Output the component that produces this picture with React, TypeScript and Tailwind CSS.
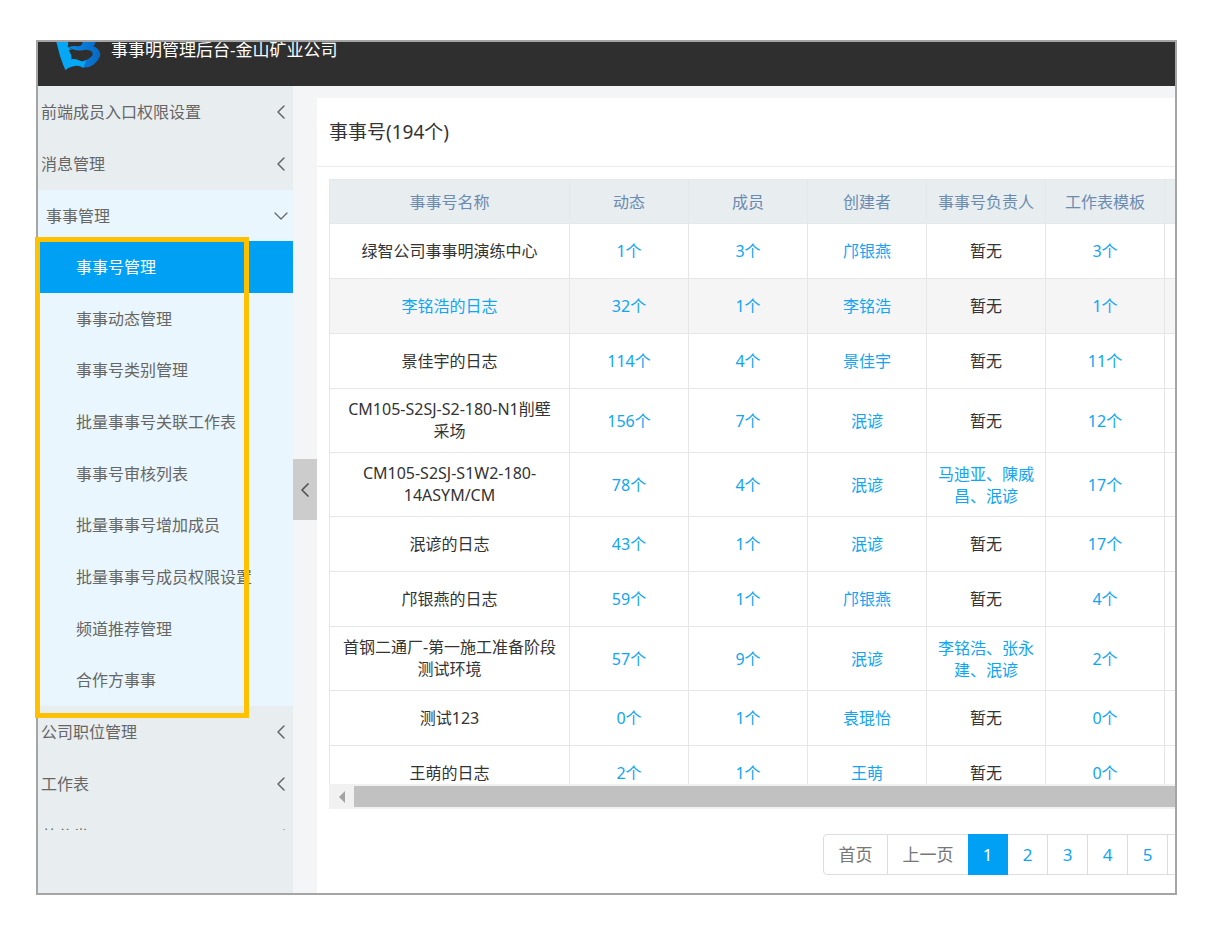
import { useState } from "react";
import { ChevronDown, ChevronLeft } from "lucide-react";
import clsx from "clsx";

type Row = {
  name: string;
  posts: number;
  members: number;
  creator: string;
  owners?: string;
  templates: number;
};

const subItems = [
  "事事号管理",
  "事事动态管理",
  "事事号类别管理",
  "批量事事号关联工作表",
  "事事号审核列表",
  "批量事事号增加成员",
  "批量事事号成员权限设置",
  "频道推荐管理",
  "合作方事事",
];

const columns = ["事事号名称", "动态", "成员", "创建者", "事事号负责人", "工作表模板"];

const rows: Row[] = [
  { name: "绿智公司事事明演练中心", posts: 1, members: 3, creator: "邝银燕", templates: 3 },
  { name: "李铭浩的日志", posts: 32, members: 1, creator: "李铭浩", templates: 1 },
  { name: "景佳宇的日志", posts: 114, members: 4, creator: "景佳宇", templates: 11 },
  { name: "CM105-S2SJ-S2-180-N1削壁采场", posts: 156, members: 7, creator: "泯谚", templates: 12 },
  { name: "CM105-S2SJ-S1W2-180-14ASYM/CM", posts: 78, members: 4, creator: "泯谚", owners: "马迪亚、陳威昌、泯谚", templates: 17 },
  { name: "泯谚的日志", posts: 43, members: 1, creator: "泯谚", templates: 17 },
  { name: "邝银燕的日志", posts: 59, members: 1, creator: "邝银燕", templates: 4 },
  { name: "首钢二通厂-第一施工准备阶段测试环境", posts: 57, members: 9, creator: "泯谚", owners: "李铭浩、张永建、泯谚", templates: 2 },
  { name: "测试123", posts: 0, members: 1, creator: "袁琨怡", templates: 0 },
  { name: "王萌的日志", posts: 2, members: 1, creator: "王萌", templates: 0 },
];

export default function App() {
  return (
    <div className="flex h-screen flex-col bg-white pt-10 pr-7 pb-[35px] pl-9 font-['Noto_Sans','Noto_Sans_CJK_SC',sans-serif] text-base text-[#333]">
      <div className="flex min-h-0 flex-1 flex-col border-2 border-[#a5a5a5]">
        <Header />
        <div className="flex min-h-0 flex-1">
          <Sidebar />
          <div className="flex w-6 shrink-0 flex-col justify-center bg-[#f3f5f6]">
            <button type="button" aria-label="收起菜单" className="flex h-[61px] items-center justify-center bg-[#ccc] text-[#555]">
              <ChevronLeft size={24} strokeWidth={1.75} />
            </button>
          </div>
          <main className="flex min-w-0 flex-1 flex-col overflow-hidden border-t-12 border-[#f3f5f6] bg-white">
            <h1 className="border-b border-[#ececec] px-3 py-5 text-[19px] leading-7">事事号(194个)</h1>
            <div className="flex min-h-0 flex-1 flex-col pt-3 pl-3">
              <DataTable />
              <ScrollTrack />
            </div>
            <Pagination />
          </main>
        </div>
      </div>
    </div>
  );
}

function Header() {
  return (
    <header className="flex h-11 shrink-0 items-start overflow-hidden bg-[#2f2f2f] pl-3 text-white">
      <Logo />
      <span className="pl-px text-[17px] leading-4">事事明管理后台-金山矿业公司</span>
    </header>
  );
}

function Logo() {
  return (
    <svg width="60" height="28" viewBox="0 0 180 84" aria-hidden="true">
      <defs>
        <linearGradient id="logo-lobe" x1="0" y1="0" x2="1" y2="0">
          <stop offset="0" stopColor="#0b8ee6" />
          <stop offset="0.5" stopColor="#0a78d6" />
          <stop offset="1" stopColor="#0669c4" />
        </linearGradient>
      </defs>
      <path
        d="M98 0 H136 Q136 8 130 13 Q148 20 151 36 Q150 52 130 68 Q116 79 94 76 L102 56 Q118 52 127 41 Q132 30 118 25 Q108 22 98 25 Q82 27 66 21 L56 15 Q74 10 84 13 Q98 12 98 0 Z"
        fill="url(#logo-lobe)"
      />
      <path
        d="M19 0 H54 Q57 6 53 13 Q58 20 66 22 L56 25 Q66 38 64 52 Q78 49 90 56 Q98 60 108 55 L100 77 Q84 68 70 73 Q56 77 46 84 Q38 66 30 42 Q24 18 19 0 Z"
        fill="#06a7f5"
      />
    </svg>
  );
}

function Sidebar() {
  const [active, setActive] = useState(subItems[0]);

  return (
    <nav className="w-[255px] shrink-0 bg-[#e8edf0] text-[#666]">
      <MenuItem label="前端成员入口权限设置" />
      <MenuItem label="消息管理" />
      <div className="bg-[#eaf6fd]">
        <button type="button" className="flex h-[51px] w-full items-center justify-between pl-2">
          事事管理
          <ChevronDown size={24} strokeWidth={1.25} />
        </button>
        <div className="relative">
          <ul className="flex h-[465px] flex-col">
            {subItems.map((item) => (
              <li key={item} className="flex-1">
                <a
                  href="#"
                  onClick={() => setActive(item)}
                  className={clsx(
                    "flex h-full items-center pl-[38px]",
                    item === active && "bg-[#00a1f5] text-white",
                  )}
                >
                  {item}
                </a>
              </li>
            ))}
          </ul>
          <div className="pointer-events-none absolute -top-1 -bottom-3 -left-[3px] w-[214px] border-5 border-[#ffc000]" />
        </div>
      </div>
      <MenuItem label="公司职位管理" />
      <MenuItem label="工作表" />
      <div className="h-5 overflow-hidden">
        <MenuItem label="总分类" />
      </div>
    </nav>
  );
}

function MenuItem({ label }: { label: string }) {
  return (
    <button type="button" className="flex h-[52px] w-full items-center justify-between pl-[3px]">
      {label}
      <ChevronLeft size={24} strokeWidth={1.5} />
    </button>
  );
}

function DataTable() {
  return (
    <div className="min-h-0 flex-1 overflow-hidden">
      <table className="w-full table-fixed border-collapse border-l border-[#e8e8e8] text-center leading-[22px]">
        <colgroup>
          <col className="w-60" />
          <col className="w-[119px]" />
          <col className="w-[119px]" />
          <col className="w-[119px]" />
          <col className="w-[119px]" />
          <col className="w-[119px]" />
          <col />
        </colgroup>
        <thead>
          <tr className="h-11 bg-[#e8edf0] text-[#6b8bb0]">
            {columns.map((column) => (
              <th key={column} className="border border-[#e4e8ea] font-normal">
                {column}
              </th>
            ))}
            <th className="border-y border-[#e4e8ea]" />
          </tr>
        </thead>
        <tbody>
          {rows.map((row) => (
            <TableRow key={row.name} row={row} hovered={row.name === "李铭浩的日志"} />
          ))}
        </tbody>
      </table>
    </div>
  );
}

function TableRow({ row, hovered }: { row: Row; hovered: boolean }) {
  const cell = "border border-[#e6e6e6]";

  return (
    <tr className={clsx("h-[55px]", hovered && "bg-[#f5f5f5]")}>
      <td className={clsx(cell, "px-3 pt-[9px] pb-[10px]", hovered && "text-[#10a5f5]")}>{row.name}</td>
      <td className={cell}>
        <CellLink>{row.posts}个</CellLink>
      </td>
      <td className={cell}>
        <CellLink>{row.members}个</CellLink>
      </td>
      <td className={cell}>
        <CellLink>{row.creator}</CellLink>
      </td>
      <td className={clsx(cell, "px-[10px]")}>{row.owners ? <CellLink>{row.owners}</CellLink> : "暂无"}</td>
      <td className={cell}>
        <CellLink>{row.templates}个</CellLink>
      </td>
      <td className="border-y border-[#e6e6e6]" />
    </tr>
  );
}

function CellLink({ children }: { children: React.ReactNode }) {
  return (
    <a href="#" className="text-[#10a5f5]">
      {children}
    </a>
  );
}

function ScrollTrack() {
  return (
    <div className="flex h-[25px] shrink-0 bg-[#f1f1f1] py-0.5">
      <button type="button" aria-label="向左滚动" className="flex w-[25px] items-center justify-center">
        <svg width="6" height="12" viewBox="0 0 6 12">
          <path d="M6 0 V12 L0 6 Z" fill="#a3a3a3" />
        </svg>
      </button>
      <div className="flex-1 bg-[#c1c1c1]" />
    </div>
  );
}

function Pagination() {
  const [page, setPage] = useState(1);

  return (
    <div className="mt-[25px] mb-[18px] flex h-[41px] shrink-0 justify-end text-[17px]">
      <button type="button" className="w-[65px] rounded-l border border-[#ddd] text-[#777]">
        首页
      </button>
      <button type="button" className="w-20 border-y border-[#ddd] text-[#777]">
        上一页
      </button>
      {[1, 2, 3, 4, 5].map((n) => (
        <button
          key={n}
          type="button"
          onClick={() => setPage(n)}
          className={clsx(
            "w-10 border-y border-r",
            n === page ? "border-[#00a1f5] bg-[#00a1f5] text-white" : "border-[#ddd] text-[#10a5f5]",
          )}
        >
          {n}
        </button>
      ))}
      <div className="w-[7px] border-y border-[#ddd]" />
    </div>
  );
}
